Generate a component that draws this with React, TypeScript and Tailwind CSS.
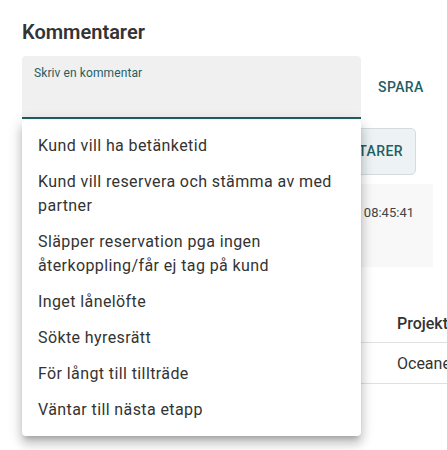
const REASONS = [
  "Kund vill ha betänketid",
  "Kund vill reservera och stämma av med partner",
  "Släpper reservation pga ingen återkoppling/får ej tag på kund",
  "Inget lånelöfte",
  "Sökte hyresrätt",
  "För långt till tillträde",
  "Väntar till nästa etapp",
];

export default function App() {
  return (
    <div
      className="relative w-[447px] h-[450px] overflow-hidden bg-white text-[#333]"
      style={{ fontFamily: "Roboto, 'Noto Sans', sans-serif" }}
    >
      <div className="pl-[22px] pt-[18px]">
        {/* Header */}
        <h2 className="text-[20px] leading-7 font-semibold text-[#333]">Kommentarer</h2>

        {/* Comment input */}
        <div className="mt-[10px] flex items-center">
          <div className="w-[339px] h-[63px] bg-[#f0f0f0] rounded-t-[4px] border-b-2 border-[#1f5f64] px-3 pt-[9px]">
            <label className="block text-[12px] leading-4 tracking-[0.1px] text-[#1f5f64]">Skriv en kommentar</label>
          </div>
          <button className="ml-[17px] text-[14px] font-medium tracking-[0.4px] text-[#1f5f64]">
            SPARA
          </button>
        </div>

        {/* Show comments */}
        <div className="mt-[9px] flex">
          <button className="ml-[222px] w-[172px] h-[47px] rounded-[5px] border border-[#d3dcdd] bg-[#edf3f4] text-[14px] font-medium tracking-[0.4px] text-[#1f5f64] text-right pr-[12px]">
            VISA KOMMENTARER
          </button>
        </div>

        {/* Latest comment */}
        <div className="mt-[9px] w-[411px] h-[83px] bg-[#f8f8f8] px-4 pt-[20px] flex justify-between text-[13px] leading-[18px] text-[#444]">
          <span>Kund vill ha betänketid</span>
          <span className="pr-[3px]">2024-03-15 08:45:41</span>
        </div>

        {/* Table */}
        <table className="mt-[39px] w-[600px] text-[16px] text-left border-collapse">
          <thead>
            <tr className="h-[36px] border-b border-[#e0e0e0]">
              <th className="w-[375px] pl-4 font-medium">Datum</th>
              <th className="font-medium">Projekt</th>
            </tr>
          </thead>
          <tbody>
            <tr className="h-[41px] border-b border-[#e0e0e0]">
              <td className="pl-4 pt-[2px]">2024-03-15</td>
              <td className="pt-[2px]">Oceanen</td>
            </tr>
          </tbody>
        </table>
      </div>

      {/* Dropdown menu */}
      <ul className="absolute left-[22px] top-[120px] w-[339px] py-2 bg-white rounded-[4px] shadow-[0_5px_5px_-3px_rgba(0,0,0,0.2),0_8px_10px_1px_rgba(0,0,0,0.14),0_3px_14px_2px_rgba(0,0,0,0.12)]">
        {REASONS.map((r) => (
          <li key={r} className="px-4 py-[6px] text-[16px] leading-6 tracking-[0.4px] text-[#333]">
            {r}
          </li>
        ))}
      </ul>
    </div>
  );
}
